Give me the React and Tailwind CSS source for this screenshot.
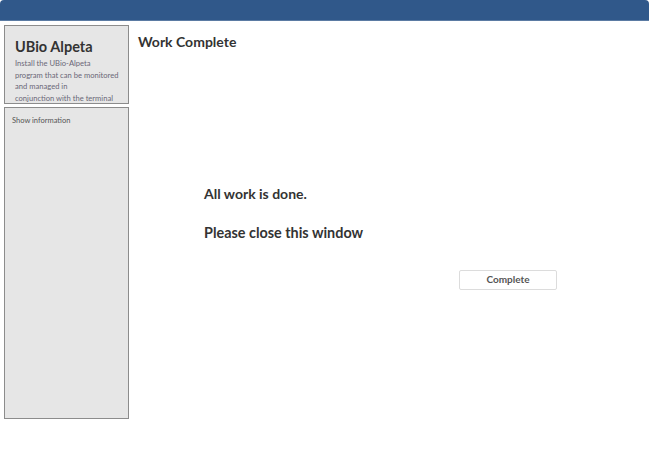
export default function App() {
  return (
    <div className="w-[649px] h-[450px] bg-white overflow-hidden" style={{ fontFamily: 'Lato, "Noto Sans", sans-serif' }}>
      {/* top bar */}
      <div className="h-[21px] bg-[#30588a] rounded-t-[4px] border-b border-[#5b7ba3]"></div>

      <div className="flex gap-[9px] pl-[4px] pt-[4px]">
        {/* sidebar */}
        <div className="w-[125px] flex flex-col gap-[3px]">
          <div className="h-[79px] bg-[#e6e6e6] border border-[#8c8c8c] pl-[10px] pt-[11px] overflow-hidden">
            <h1 className="text-[14.5px] leading-[20px] font-bold text-[#333]">UBio Alpeta</h1>
            <p className="text-[7.6px] leading-[11.6px] text-[#6b6878] mt-[1px] whitespace-nowrap">
              Install the UBio-Alpeta
              <br />
              program that can be monitored
              <br />
              and managed in
              <br />
              conjunction with the terminal
            </p>
          </div>
          <div className="h-[312px] bg-[#e6e6e6] border border-[#8c8c8c] pl-[7px] pt-[8px]">
            <p className="text-[7.5px] leading-[10px] text-[#555]">Show information</p>
          </div>
        </div>

        {/* main */}
        <div className="flex-1 pt-[7px]">
          <h2 className="text-[14px] leading-[20px] font-bold text-[#333]">Work Complete</h2>
          <div className="pl-[66px] pt-[132px]">
            <p className="text-[14px] leading-[20px] font-bold text-[#333]">All work is done.</p>
            <p className="text-[14.4px] leading-[20px] font-bold text-[#333] mt-[19px]">Please close this window</p>
            <div className="pl-[255px] pt-[22px]">
              <button className="w-[98px] h-[20px] border border-[#dcdcdc] rounded-[2px] bg-white text-[10px] font-bold text-[#555]">
                Complete
              </button>
            </div>
          </div>
        </div>
      </div>
    </div>
  );
}
